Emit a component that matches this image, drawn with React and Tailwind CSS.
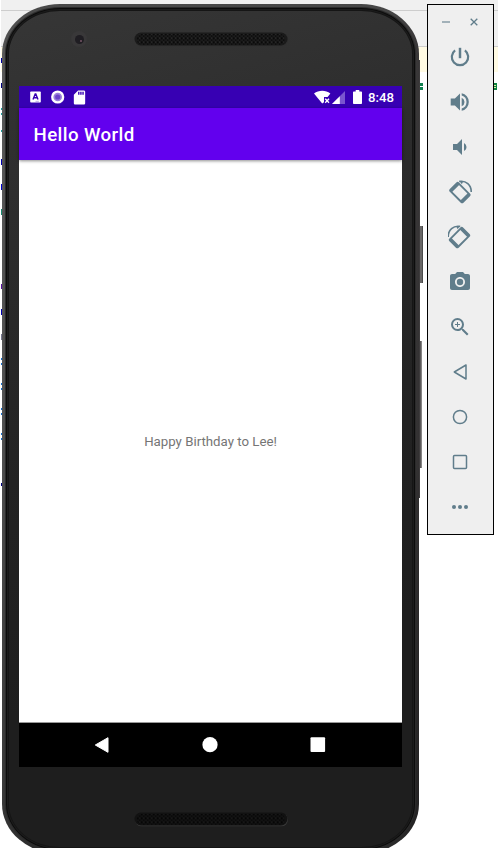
import React from "react";
import {
  MdVolumeDown,
  MdCameraAlt,
  MdZoomIn,
  MdSdCard,
} from "react-icons/md";

const codeMarks = [
  [58, 5, "#0000a0"], [83, 5, "#000080"], [108, 2, "#20a0a0"], [113, 2, "#20a0a0"],
  [130, 2, "#20a0a0"], [159, 6, "#0000b0"], [184, 6, "#0000d0"], [209, 6, "#178a70"],
  [284, 5, "#5a10a0"], [309, 6, "#0000b0"], [334, 6, "#777790"], [358, 2, "#1870d0"],
  [363, 2, "#1870d0"], [383, 2, "#1870d0"], [388, 2, "#1870d0"], [408, 2, "#1870d0"],
  [413, 2, "#1870d0"], [433, 2, "#1870d0"], [438, 2, "#1870d0"], [483, 3, "#000080"],
];

function EditorBackdrop() {
  return (
    <div className="absolute inset-0 flex flex-col bg-white">
      <div className="ml-px h-[10px] bg-[#f0f0f0]" />
      <div className="ml-px h-px bg-[#cdcdcd]" />
      <div className="ml-px h-[35px] bg-[#f0f0f0]" />
      <div className="ml-px h-px bg-[#cdcdcd]" />
      <div className="ml-px h-[25px] bg-[#fffae3]" />
      {codeMarks.map(([top, height, color]) => (
        <div key={top} className="absolute left-px w-px" style={{ top, height, background: color }} />
      ))}
      <div className="absolute left-[420px] top-[83px] h-[3px] w-[3px] bg-[#108050]" />
      <div className="absolute left-[420px] top-[87px] h-[3px] w-[3px] bg-[#108050]" />
      <div className="absolute left-[494px] top-[83px] h-[7px] w-[3px] bg-[#0c8240]" />
      <div className="absolute left-[494px] top-[85px] h-px w-[2px] bg-[#d8f0a0]" />
      <div className="absolute left-[494px] top-[87px] h-px w-[2px] bg-[#d8f0a0]" />
    </div>
  );
}

function Speaker({ id, lower }) {
  return (
    <svg width="155" height="15" viewBox="0 0 155 15" className="block">
      <defs>
        <pattern id={id} x="3" y="1.5" width="4" height="4" patternUnits="userSpaceOnUse">
          <rect x="0" y="0" width="1.6" height="1.6" fill={lower ? "#020202" : "#060606"} />
          <rect x="2" y="2" width="1.5" height="1.5" fill={lower ? "#080808" : "#0a0a0a"} />
          <rect x="2" y="0" width="1" height="1" fill={lower ? "#1c1c1c" : "#303030"} />
        </pattern>
      </defs>
      <rect x="1" y="1.3" width="153" height="13" rx="6.5" fill={lower ? "#383838" : "#303030"} />
      <rect x="0.5" y="0.5" width="153" height="13" rx="6.5" fill={lower ? "#121212" : "#1b1b1b"} />
      <rect x="3" y="2" width="148" height="11" rx="5" fill={`url(#${id})`} />
    </svg>
  );
}

function StatusBar() {
  return (
    <div className="flex h-[22px] shrink-0 items-center bg-[#3700b3] pl-[11px] pr-[8px] text-white">
      <svg width="11" height="12" viewBox="0 0 11 12">
        <rect x="0.2" y="0.5" width="10.6" height="11" rx="0.8" fill="#fff" />
        <path d="M3 8.6 5.2 3h.6L8 8.6M3.8 6.7h3.4" fill="none" stroke="#3700b3" strokeWidth="1.4" />
        <path d="M5.5 10.3h3.4" stroke="#b8a5e4" strokeWidth="1" />
      </svg>
      <svg className="ml-[10px]" width="14" height="14" viewBox="0 0 14 14">
        <circle cx="6.7" cy="7" r="6.6" fill="#fff" />
        <circle cx="6.7" cy="7" r="4.3" fill="#9b80db" />
        <circle cx="6.7" cy="7" r="2.6" fill="#6b43c9" />
      </svg>
      <MdSdCard className="ml-[6px] size-[17px]" />
      <div className="grow" />
      <svg width="17" height="14" viewBox="0 0 17 14">
        <path d="M0 3.6C4.8-.2 11.6-.2 16.4 3.6L13.6 7H10v5.2L8.2 13.4Z" fill="#fff" />
        <path d="m11.2 8.7 3.8 4m0-4-3.8 4" stroke="#fff" strokeWidth="1.3" />
      </svg>
      <svg className="ml-[1px]" width="13" height="13" viewBox="0 0 13 13">
        <path d="M13 0v13H0Z" fill="#7a55cf" />
        <path d="M7.8 5.2V13H0Z" fill="#fff" />
      </svg>
      <svg className="ml-[8px]" width="9" height="14" viewBox="0 0 9 14">
        <path d="M2.7 0h3.6v1.4H8.2q.8 0 .8.8v11q0 .8-.8.8H.8Q0 14 0 13.2v-11q0-.8.8-.8h1.9Z" fill="#fff" />
      </svg>
      <span className="ml-[6px] w-[26px] whitespace-nowrap pt-px text-[13.2px] font-medium leading-none">8:48</span>
    </div>
  );
}

function Phone() {
  return (
    <div className="absolute left-[2px] top-[4px]">
      <div className="absolute left-[417px] top-[56px] h-[438px] w-px bg-[#3d3b3c]" />
      <div className="absolute left-[418px] top-[222px] h-[57px] w-[3px] border-r border-[#4b4b4b] bg-[#696767]" />
      <div className="absolute left-[418px] top-[337px] h-[127px] w-[2px] border-r border-[#858383] bg-[#5c5a5b]" />
      <div className="h-[850px] w-[417px] rounded-[58px/50px] bg-[linear-gradient(180deg,rgba(0,0,0,0)_0%,rgba(0,0,0,0.1)_50%,rgba(0,0,0,0.4)_100%),linear-gradient(90deg,#5e5e5e_0,#525252_3px,#4a4a4a_30px,#464646_390px,#393738_417px)] p-[3px]">
        <div className="h-full rounded-[55px/47px] bg-[#2b2b2b] p-px">
          <div className="h-full rounded-[54px/46px] bg-[#0c0c0c] p-px">
            <div className="h-full rounded-[53px/45px] bg-[#1c1c1c] p-px">
              <div className="h-full rounded-[52px/44px] bg-[#151515] p-px">
                <div className="flex h-full flex-col items-center rounded-[51px/43px] bg-[linear-gradient(165deg,#363636_0%,#2d2d2d_22%,#232323_50%,#1e1e1e_75%,#1e1e1e_100%)]">
                  <div className="flex h-[75px] w-[383px] shrink-0 items-start">
                    <div className="ml-[52px] mt-[20px] flex size-[16px] items-center justify-center rounded-full bg-[#393839]">
                      <div className="flex size-[9px] items-center justify-center rounded-full bg-[#1f1d22]">
                        <div className="ml-[4px] mt-[4px] size-[2px] rounded-full bg-[#765466]" />
                      </div>
                    </div>
                    <div className="ml-[47px] mt-[21px]">
                      <Speaker id="earpiece" />
                    </div>
                  </div>
                  <div className="flex h-[681px] w-[383px] shrink-0 flex-col bg-white">
                    <StatusBar />
                    <div className="z-10 flex h-[52px] shrink-0 items-center bg-[#6200ee] pl-[14.5px] pt-[2px] text-[18.7px] font-medium tracking-[0.4px] text-white shadow-[0_1px_3px_rgba(0,0,0,0.45)]">
                      Hello World
                    </div>
                    <div className="flex grow items-center justify-center border-b border-[#999] pt-[1px] text-[13.25px] text-[#757575]">
                      Happy Birthday to Lee!
                    </div>
                    <div className="flex h-[44px] shrink-0 items-center bg-black">
                      <svg className="ml-[76px]" width="14" height="16" viewBox="0 0 14 16">
                        <path d="M13 .7v14.6L.3 8Z" fill="#fff" stroke="#fff" strokeLinejoin="round" />
                      </svg>
                      <svg className="ml-[93px]" width="16" height="16" viewBox="0 0 16 16">
                        <circle cx="8" cy="7.7" r="7.6" fill="#fff" />
                      </svg>
                      <svg className="ml-[92px]" width="16" height="16" viewBox="0 0 16 16">
                        <rect x="0.5" y="0.3" width="14.6" height="14.8" rx="1" fill="#fff" />
                      </svg>
                    </div>
                  </div>
                  <div className="pl-px pt-[45px]">
                    <Speaker id="bottom-speaker" lower />
                  </div>
                </div>
              </div>
            </div>
          </div>
        </div>
      </div>
    </div>
  );
}

function Power() {
  return (
    <svg width="24" height="24" viewBox="0 0 24 24" fill="none" stroke="currentColor" strokeWidth="2.2">
      <path d="M12 2.8v10.4" strokeWidth="2.5" />
      <path d="M7.1 5.4a8.2 8.2 0 1 0 9.8 0" />
    </svg>
  );
}

function VolumeUp() {
  return (
    <svg width="24" height="24" viewBox="0 0 24 24" fill="currentColor">
      <path d="M2.7 8.6h4.2L12 3.6v16.8l-5.1-5H2.7Z" />
      <path d="M13.7 7.7a4.7 4.7 0 0 1 0 8.6Z" />
      <path d="M13.7 3.2a9 9 0 0 1 0 17.6v-2.3a6.8 6.8 0 0 0 0-13Z" />
    </svg>
  );
}

function Rotate({ flipped }) {
  return (
    <svg width="24" height="24" viewBox="0 0 24 24">
      <g transform={flipped ? "matrix(-1 0 0 1 23.4 0)" : undefined}>
        <g transform="translate(11.9 12.6) rotate(-45)">
          <rect x="-5.6" y="-8.7" width="11.2" height="17.4" rx="1" fill="none" stroke="currentColor" strokeWidth="1.9" />
          <path d="M-5.5-8.7H5.5v2.8H-5.5Zm0 14.6H5.5v2.8H-5.5Z" fill="currentColor" />
        </g>
        <path d="M11.2 1.5C18 .3 23.4 4.9 23.2 12" fill="none" stroke="currentColor" strokeWidth="1.6" />
        <path d="m11.2.8 4.1.4L13.8 4.2Z" fill="currentColor" />
      </g>
    </svg>
  );
}

function Outline({ children }) {
  return (
    <svg width="24" height="24" viewBox="0 0 24 24" fill="none" stroke="currentColor" strokeWidth="1.5" strokeLinejoin="round">
      {children}
    </svg>
  );
}

function EmulatorToolbar() {
  const tools = [
    <Power />,
    <VolumeUp />,
    <MdVolumeDown size={24} />,
    <Rotate />,
    <Rotate flipped />,
    <MdCameraAlt size={24} />,
    <MdZoomIn size={24} />,
    <Outline><path d="M18 5v14L6.3 12Z" /></Outline>,
    <Outline><circle cx="12" cy="12" r="6.6" /></Outline>,
    <Outline><rect x="5.5" y="5.5" width="13" height="13" rx="1" /></Outline>,
    <svg width="24" height="24" viewBox="0 0 24 24" fill="currentColor">
      <circle cx="6" cy="12" r="2" />
      <circle cx="12" cy="12" r="2" />
      <circle cx="18" cy="12" r="2" />
    </svg>,
  ];
  return (
    <div className="absolute left-[427px] top-[4px] flex h-[531px] w-[67px] flex-col border border-black bg-[#efefef] text-[#607d8b]">
      <div className="flex h-[29px] shrink-0 items-center pl-[14px] pt-[5px]">
        <div className="h-[2px] w-[8px] bg-[#a2b1b9]" />
        <svg className="ml-[20px]" width="8" height="8" viewBox="0 0 8 8">
          <path d="m.7.7 6.6 6.6m0-6.6L.7 7.3" stroke="currentColor" strokeWidth="1.3" />
        </svg>
      </div>
      {tools.map((tool, i) => (
        <div key={i} className="flex h-[45px] shrink-0 items-center justify-center pr-px">
          {tool}
        </div>
      ))}
    </div>
  );
}

export default function App() {
  return (
    <div className="relative h-[848px] w-[498px] overflow-hidden bg-white font-['Roboto',sans-serif]">
      <EditorBackdrop />
      <Phone />
      <EmulatorToolbar />
    </div>
  );
}
